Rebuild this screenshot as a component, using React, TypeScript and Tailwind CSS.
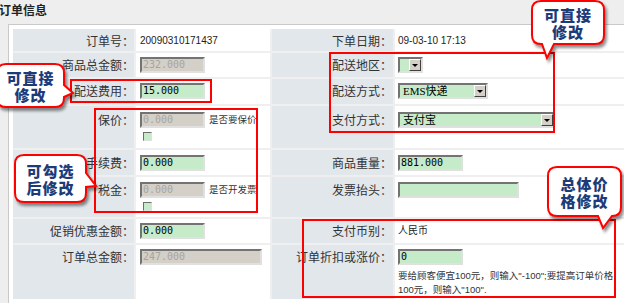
import React from 'react';

type Tail = { side: 'right' | 'bottom'; t1: number; t2: number; tx: number; ty: number };

const bubblePath = (w: number, h: number, r: number, t: Tail) => {
  if (t.side === 'right') {
    return `M${r},0 H${w - r} Q${w},0 ${w},${r} V${t.t1} L${t.tx},${t.ty} L${w},${t.t2} V${h - r} Q${w},${h} ${w - r},${h} H${r} Q0,${h} 0,${h - r} V${r} Q0,0 ${r},0 Z`;
  }
  return `M${r},0 H${w - r} Q${w},0 ${w},${r} V${h - r} Q${w},${h} ${w - r},${h} H${t.t2} L${t.tx},${t.ty} L${t.t1},${h} H${r} Q0,${h} 0,${h - r} V${r} Q0,0 ${r},0 Z`;
};

const Bubble = ({ box, w, h, tail, lines }: { box: string; w: number; h: number; tail: Tail; lines: string[] }) => (
  <div className={`absolute ${box}`}>
    <svg
      width={w}
      height={h}
      className="absolute left-0 top-0 overflow-visible drop-shadow-[2px_3px_1.5px_rgba(0,0,0,0.45)]"
    >
      <path d={bubblePath(w, h, 9, tail)} fill="#ffffff" stroke="#ff0000" strokeWidth="2" />
    </svg>
    <div className="relative flex h-full w-full flex-col items-center justify-center font-['Noto_Sans_CJK_SC',sans-serif] text-[15px] font-black leading-[17px] tracking-[1px] text-[#1d3b78]">
      {lines.map((l) => (
        <span key={l}>{l}</span>
      ))}
    </div>
  </div>
);

const Field = ({ value, width, disabled }: { value: string; width: string; disabled?: boolean }) => (
  <div
    className={`${width} h-[16px] border-2 border-t-[#737373] border-l-[#737373] border-r-[#e0e0e0] border-b-[#e0e0e0] pl-[1px] font-['DejaVu_Sans_Mono',monospace] text-[10px] leading-[12px] ${
      disabled ? 'bg-[#d4d0c8] text-[#a8a49c]' : 'bg-[#c6ebc9] text-black'
    }`}
  >
    {value}
  </div>
);

const Select = ({ value, width }: { value: string; width: string }) => (
  <div className={`${width} flex h-[16px] border-2 border-t-[#737373] border-l-[#737373] border-r-[#e0e0e0] border-b-[#e0e0e0] bg-[#c6ebc9]`}>
    <span className="flex-1 pl-[3px] font-['Liberation_Serif','Noto_Sans_CJK_SC',serif] text-[11px] leading-[12px] text-black">
      {value}
    </span>
    <span className="flex h-[12px] w-[12px] items-center justify-center border border-t-white border-l-white border-r-[#404040] border-b-[#404040] bg-[#d4d0c8]">
      <span className="h-0 w-0 border-l-[3px] border-r-[3px] border-t-[3px] border-l-transparent border-r-transparent border-t-black" />
    </span>
  </div>
);

const Check = () => (
  <span className="mt-[4px] ml-[3px] block h-[9px] w-[9px] border border-t-[#6e6e6e] border-l-[#6e6e6e] border-r-[#e0e0e0] border-b-[#e0e0e0] bg-[#c6ebc9]" />
);

const small = "font-['Liberation_Sans','Noto_Sans_CJK_SC',sans-serif] text-[9.5px] text-[#333]";
const value = "block font-['Liberation_Sans','Noto_Sans_CJK_SC',sans-serif] text-[10px] leading-[16px] text-[#222]";

const rows: { pt: string; l1: string; v1: React.ReactNode; l2: string; v2: React.ReactNode }[] = [
  {
    pt: 'pt-[4px]',
    l1: '订单号：',
    v1: <span className={value}>20090310171437</span>,
    l2: '下单日期：',
    v2: <span className={value}>09-03-10 17:13</span>,
  },
  {
    pt: 'pt-[4px]',
    l1: '商品总金额：',
    v1: <Field value="232.000" width="w-[65px]" disabled />,
    l2: '配送地区：',
    v2: <Select value="" width="w-[25px]" />,
  },
  {
    pt: 'pt-[4px]',
    l1: '配送费用：',
    v1: <Field value="15.000" width="w-[65px]" />,
    l2: '配送方式：',
    v2: <Select value="EMS快递" width="w-[90px]" />,
  },
  {
    pt: 'pt-[6px]',
    l1: '保价：',
    v1: (
      <div>
        <div className="flex items-center gap-[4px]">
          <Field value="0.000" width="w-[65px]" disabled />
          <span className={small}>是否要保价</span>
        </div>
        <Check />
      </div>
    ),
    l2: '支付方式：',
    v2: <Select value="支付宝" width="w-[157px]" />,
  },
  {
    pt: 'pt-[5px]',
    l1: '手续费：',
    v1: <Field value="0.000" width="w-[65px]" />,
    l2: '商品重量：',
    v2: <Field value="881.000" width="w-[65px]" />,
  },
  {
    pt: 'pt-[5px]',
    l1: '税金：',
    v1: (
      <div>
        <div className="flex items-center gap-[4px]">
          <Field value="0.000" width="w-[65px]" disabled />
          <span className={small}>是否开发票</span>
        </div>
        <Check />
      </div>
    ),
    l2: '发票抬头：',
    v2: <Field value="" width="w-[121px]" />,
  },
  {
    pt: 'pt-[4px]',
    l1: '促销优惠金额：',
    v1: <Field value="0.000" width="w-[65px]" />,
    l2: '支付币别：',
    v2: <span className={value}>人民币</span>,
  },
  {
    pt: 'pt-[4px]',
    l1: '订单总金额：',
    v1: <Field value="247.000" width="w-[122px]" disabled />,
    l2: '订单折扣或涨价：',
    v2: (
      <div>
        <Field value="0" width="w-[65px]" />
        <p className={`${small} mt-[4px] whitespace-nowrap leading-[14px]`}>
          要给顾客便宜100元，则输入"-100";要提高订单价格
          <br />
          100元，则输入"100".
        </p>
      </div>
    ),
  },
];

const label = "font-['Noto_Sans_CJK_SC',sans-serif] text-[12px] leading-[16px] text-[#333] text-right bg-[#e2e7eb]";

export default function App() {
  return (
    <div className="relative h-[303px] w-[624px] overflow-hidden bg-[#eeeeee]">
      <h2 className="ml-[-1px] h-[24px] font-['Noto_Sans_CJK_SC',sans-serif] text-[12px] font-bold leading-[20px] text-[#222]">
        订单信息
      </h2>

      <div className="ml-[8px] w-[640px] border-t border-l border-[#c9c9c9] bg-white p-[4px]">
        <div className="grid grid-cols-[121px_134px_121px_1fr] grid-rows-[22px_24px_25px_42px_25px_40px_24px_54px] gap-[2px] bg-[#efefef]">
          {rows.map((r) => (
            <React.Fragment key={r.l1}>
              <div className={`${label} ${r.pt} pr-[0px]`}>{r.l1}</div>
              <div className={`bg-white pl-[4px] ${r.pt}`}>{r.v1}</div>
              <div className={`${label} ${r.pt} pr-[1px]`}>{r.l2}</div>
              <div className={`bg-white pl-[3px] ${r.pt}`}>{r.v2}</div>
            </React.Fragment>
          ))}
        </div>
      </div>

      {/* annotation frames */}
      <div className="absolute left-[70px] top-[79px] h-[24px] w-[142px] border-2 border-[#ff0000]" />
      <div className="absolute left-[94px] top-[108px] h-[105px] w-[164px] border-2 border-[#ff0000]" />
      <div className="absolute left-[329px] top-[52px] h-[81px] w-[226px] border-2 border-[#ff0000]" />
      <div className="absolute left-[302px] top-[219px] h-[79px] w-[314px] border-2 border-[#ff0000]" />

      {/* callouts */}
      <Bubble
        box="left-[-3px] top-[64px] w-[67px] h-[43px]"
        w={67}
        h={43}
        tail={{ side: 'right', t1: 21, t2: 33, tx: 76, ty: 29 }}
        lines={['可直接', '修改']}
      />
      <Bubble
        box="left-[532px] top-[1px] w-[72px] h-[43px]"
        w={72}
        h={43}
        tail={{ side: 'bottom', t1: 10, t2: 22, tx: 15, ty: 57 }}
        lines={['可直接', '修改']}
      />
      <Bubble
        box="left-[15px] top-[155px] w-[71px] h-[47px]"
        w={71}
        h={47}
        tail={{ side: 'right', t1: 18, t2: 32, tx: 81, ty: 31 }}
        lines={['可勾选', '后修改']}
      />
      <Bubble
        box="left-[548px] top-[167px] w-[73px] h-[49px]"
        w={73}
        h={49}
        tail={{ side: 'bottom', t1: 50, t2: 64, tx: 55, ty: 61 }}
        lines={['总体价', '格修改']}
      />
    </div>
  );
}
